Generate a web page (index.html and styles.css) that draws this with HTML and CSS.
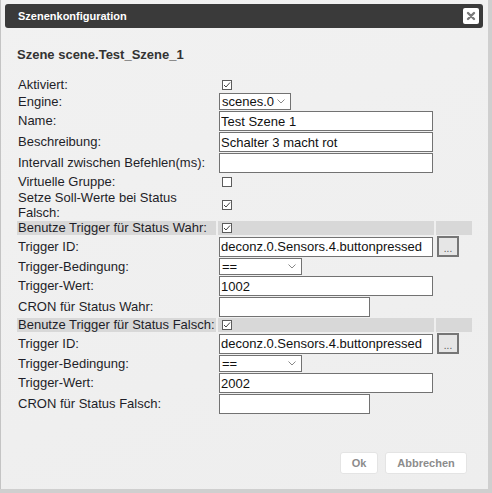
FILE: index.html
```html
<!DOCTYPE html>
<html>
<head>
 <title>Szenenkonfiguration</title>
 <link rel="stylesheet" href="styles.css">
</head>
<body>
 <!-- scene config dialog -->
 <div class="dialog">
  <div class="titlebar">
   <span class="title">Szenenkonfiguration</span>
   <span class="close">
    <svg width="10" height="10" viewBox="0 0 10 10"><path d="M2 2 L8 8 M8 2 L2 8" stroke="#7a7a7a" stroke-width="2.4" stroke-linecap="round"/></svg>
   </span>
  </div>

  <div class="content">
   <h3 class="scene-name">Szene scene.Test_Szene_1</h3>

   <table class="scene-table">
    <tr class="row-check">
     <td class="label">Aktiviert:</td>
     <td><span class="check on"><svg width="8" height="8" viewBox="0 0 8 8"><path d="M1 4 L3 6 L7 1.5" fill="none" stroke="#444" stroke-width="1"/></svg></span></td>
     <td></td>
    </tr>
    <tr class="row-select">
     <td class="label">Engine:</td>
     <td><div class="select select-engine">scenes.0<svg class="chev" width="8" height="5" viewBox="0 0 8 5"><path d="M0.5 0.5 L4 4 L7.5 0.5" fill="none" stroke="#888" stroke-width="1"/></svg></div></td>
     <td></td>
    </tr>
    <tr class="row-input">
     <td class="label">Name:</td>
     <td><input class="field" type="text" value="Test Szene 1"></td>
     <td></td>
    </tr>
    <tr class="row-input">
     <td class="label">Beschreibung:</td>
     <td><input class="field" type="text" value="Schalter 3 macht rot"></td>
     <td></td>
    </tr>
    <tr class="row-input">
     <td class="label">Intervall zwischen Befehlen(ms):</td>
     <td><input class="field" type="text" value=""></td>
     <td></td>
    </tr>
    <tr class="row-virt">
     <td class="label">Virtuelle Gruppe:</td>
     <td><span class="check"></span></td>
     <td></td>
    </tr>
    <tr class="row-two">
     <td class="label">Setze Soll-Werte bei Status Falsch:</td>
     <td><span class="check on"><svg width="8" height="8" viewBox="0 0 8 8"><path d="M1 4 L3 6 L7 1.5" fill="none" stroke="#444" stroke-width="1"/></svg></span></td>
     <td></td>
    </tr>

    <!-- trigger true -->
    <tr class="row-check highlight">
     <td class="label">Benutze Trigger für Status Wahr:</td>
     <td><span class="check on"><svg width="8" height="8" viewBox="0 0 8 8"><path d="M1 4 L3 6 L7 1.5" fill="none" stroke="#444" stroke-width="1"/></svg></span></td>
     <td></td>
    </tr>
    <tr class="row-id">
     <td class="label">Trigger ID:</td>
     <td><input class="field" type="text" value="deconz.0.Sensors.4.buttonpressed"></td>
     <td><button class="dots">...</button></td>
    </tr>
    <tr class="row-select">
     <td class="label">Trigger-Bedingung:</td>
     <td><div class="select select-cond">==<svg class="chev" width="8" height="5" viewBox="0 0 8 5"><path d="M0.5 0.5 L4 4 L7.5 0.5" fill="none" stroke="#888" stroke-width="1"/></svg></div></td>
     <td></td>
    </tr>
    <tr class="row-input">
     <td class="label">Trigger-Wert:</td>
     <td><input class="field" type="text" value="1002"></td>
     <td></td>
    </tr>
    <tr class="row-input">
     <td class="label">CRON für Status Wahr:</td>
     <td><input class="field short" type="text" value=""></td>
     <td></td>
    </tr>

    <!-- trigger false -->
    <tr class="row-check highlight">
     <td class="label">Benutze Trigger für Status Falsch:</td>
     <td><span class="check on"><svg width="8" height="8" viewBox="0 0 8 8"><path d="M1 4 L3 6 L7 1.5" fill="none" stroke="#444" stroke-width="1"/></svg></span></td>
     <td></td>
    </tr>
    <tr class="row-id">
     <td class="label">Trigger ID:</td>
     <td><input class="field" type="text" value="deconz.0.Sensors.4.buttonpressed"></td>
     <td><button class="dots">...</button></td>
    </tr>
    <tr class="row-select">
     <td class="label">Trigger-Bedingung:</td>
     <td><div class="select select-cond">==<svg class="chev" width="8" height="5" viewBox="0 0 8 5"><path d="M0.5 0.5 L4 4 L7.5 0.5" fill="none" stroke="#888" stroke-width="1"/></svg></div></td>
     <td></td>
    </tr>
    <tr class="row-input">
     <td class="label">Trigger-Wert:</td>
     <td><input class="field" type="text" value="2002"></td>
     <td></td>
    </tr>
    <tr class="row-input">
     <td class="label">CRON für Status Falsch:</td>
     <td><input class="field short" type="text" value=""></td>
     <td></td>
    </tr>
   </table>
  </div>

  <!-- dialog buttons -->
  <div class="buttonpane">
   <button class="dlg-button ok">Ok</button>
   <button class="dlg-button">Abbrechen</button>
  </div>
 </div>
</body>
</html>
```

FILE: styles.css
```css
/* page behind the dialog */
body {
 margin: 0;
 width: 492px;
 height: 493px;
 background-color: #cfcfcf;
 font-family: "Liberation Sans", Arial, sans-serif;
 overflow: hidden;
}

/* dialog box */
.dialog {
 box-sizing: border-box;
 width: 488px;
 height: 489px;
 border-left: 1px solid #c4c4c4;
 background: linear-gradient(160deg, #f1f1f1, #eeeeee);
 padding: 4px 5px 0 4px;
 display: flex;
 flex-direction: column;
}

/* title bar */
.titlebar {
 height: 24px;
 background-color: #3a3a3a;
 border-radius: 3px;
 display: flex;
 align-items: center;
 justify-content: space-between;
 padding: 0 4px 0 13px;
}
.title {
 color: #fff;
 font-size: 11px;
 font-weight: bold;
}
.close {
 width: 16px;
 height: 16px;
 background-color: #fff;
 border-radius: 2px;
 display: flex;
 align-items: center;
 justify-content: center;
}

/* content */
.content {
 padding-left: 10px;
}
.scene-name {
 margin: 19px 0 14px 2px;
 font-size: 13px;
 line-height: 16px;
 font-weight: bold;
 color: #333;
}

/* form table */
.scene-table {
 border-spacing: 2px 1px;
 margin-left: 0;
}
.scene-table td {
 padding: 0 1px;
 vertical-align: middle;
 font-size: 13px;
 line-height: 14px;
 color: #1e1e28;
}
.scene-table td.label {
 width: 197px;
}
.scene-table td:nth-child(2) {
 width: 214px;
}
.scene-table td:nth-child(3) {
 width: 34px;
}
.row-check td { height: 14px; }
.row-virt td { height: 15px; }
.row-two td { height: 30px; line-height: 15px; }
.row-input td { height: 20px; }
.row-select td { height: 17px; }
.row-id td { height: 21px; }
.highlight td { background-color: #d8d8d8; }

/* checkboxes */
.check {
 box-sizing: border-box;
 display: block;
 width: 10px;
 height: 10px;
 margin-left: 3px;
 border: 1px solid #5c5c5c;
 background-color: #fff;
}
.check svg {
 display: block;
}

/* text fields */
.field {
 box-sizing: border-box;
 display: block;
 width: 214px;
 height: 20px;
 margin: 0;
 padding: 0 1px;
 border: 1px solid #727272;
 background-color: #fff;
 font-family: "Liberation Sans", Arial, sans-serif;
 font-size: 13px;
 color: #111;
 outline: none;
}
.field.short {
 width: 151px;
}

/* drop downs */
.select {
 box-sizing: border-box;
 display: flex;
 align-items: center;
 height: 17px;
 padding: 0 2px;
 border: 1px solid #727272;
 background-color: #fff;
 font-size: 13px;
 color: #111;
}
.select .chev {
 margin-left: auto;
 margin-right: 2px;
}
.select-engine { width: 72px; }
.select-engine .chev { margin-left: 3px; }
.select-cond { width: 83px; }
.select-cond .chev { margin-right: 3px; }

/* object id picker button */
.dots {
 box-sizing: border-box;
 display: block;
 width: 22px;
 height: 21px;
 margin: 0 0 0 0;
 padding: 4px 0 0 0;
 border: 2px solid #767676;
 background-color: #e6e6e6;
 font-family: "Liberation Sans", Arial, sans-serif;
 font-size: 10px;
 color: #555;
}

/* dialog buttons */
.buttonpane {
 margin-top: auto;
 display: flex;
 justify-content: flex-end;
 gap: 7px;
 padding: 0 16px 15px 0;
}
.dlg-button {
 height: 22px;
 padding: 0;
 border: 1px solid #e4e4e4;
 border-radius: 3px;
 background-color: #fff;
 font-family: "Liberation Sans", Arial, sans-serif;
 font-size: 11px;
 font-weight: bold;
 color: #8c8c8c;
 width: 82px;
}
.dlg-button.ok {
 width: 38px;
}
```
